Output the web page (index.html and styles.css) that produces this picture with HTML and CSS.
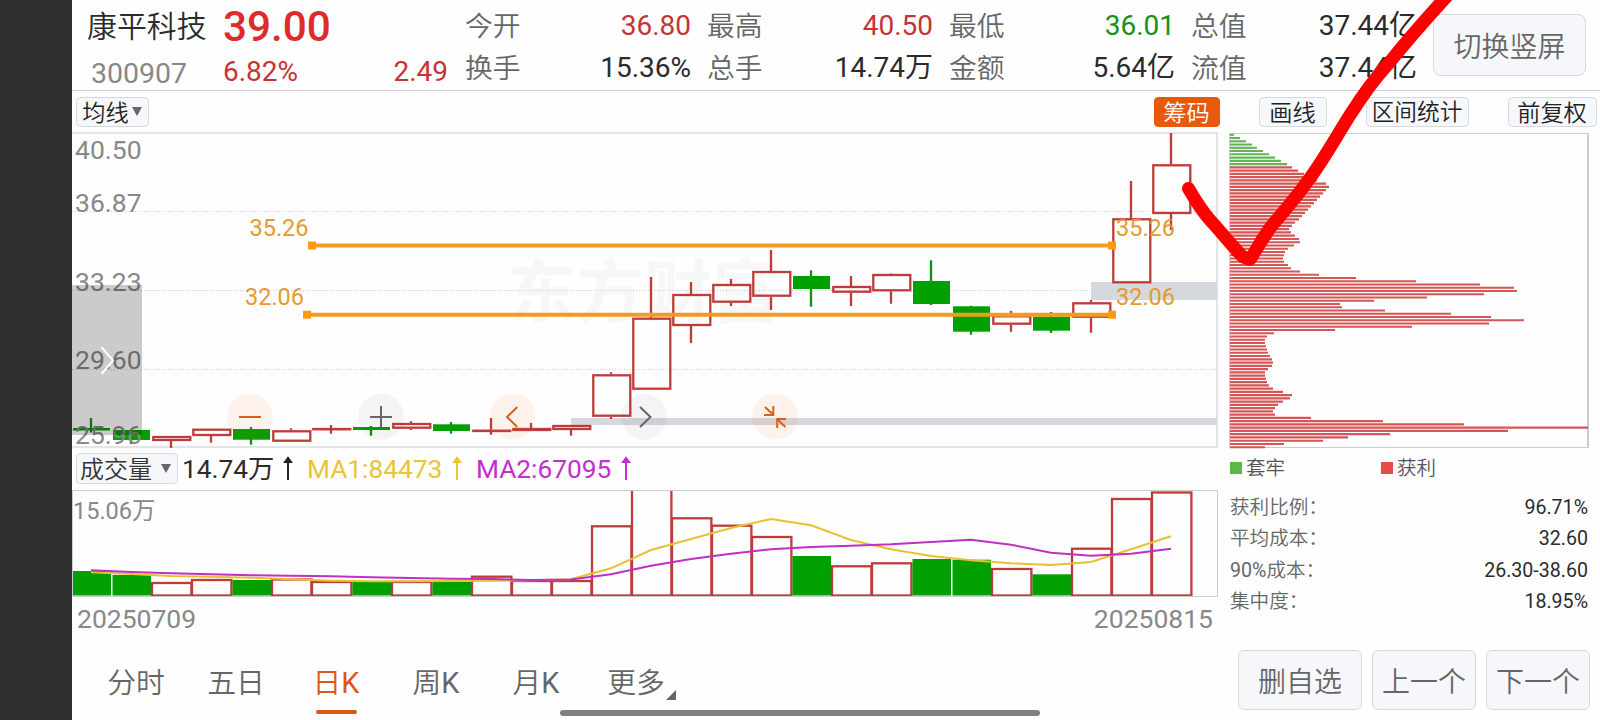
FILE: index.html
```html
<!DOCTYPE html>
<html lang="zh-CN">
<head>
    <meta charset="UTF-8">
    <meta name="viewport" content="width=device-width, initial-scale=1.0">
    <title>康平科技 300907</title>
    <link rel="stylesheet" href="styles.css">
</head>
<body>
<div class="side-strip"></div>
<div class="screen">
    <header class="header">
        <div class="stock">
            <div class="stock-name">康平科技</div>
            <div class="stock-code">300907</div>
        </div>
        <div class="price">
            <div class="price-now">39.00</div>
            <div class="price-change"><span>6.82%</span><span>2.49</span></div>
        </div>
        <div class="quotes">
            <div class="quote"><span class="label">今开</span><span class="up">36.80</span></div>
            <div class="quote"><span class="label">最高</span><span class="up">40.50</span></div>
            <div class="quote"><span class="label">最低</span><span class="down">36.01</span></div>
            <div class="quote"><span class="label">总值</span><span>37.44亿</span></div>
            <div class="quote"><span class="label">换手</span><span>15.36%</span></div>
            <div class="quote"><span class="label">总手</span><span>14.74万</span></div>
            <div class="quote"><span class="label">金额</span><span>5.64亿</span></div>
            <div class="quote"><span class="label">流值</span><span>37.44亿</span></div>
        </div>
        <button class="btn rotate-btn">切换竖屏</button>
    </header>

    <div class="toolbar">
        <button class="btn tool ma-btn">均线<i class="caret"></i></button>
        <button class="btn tool chip-btn">筹码</button>
        <button class="btn tool draw-btn">画线</button>
        <button class="btn tool range-btn">区间统计</button>
        <button class="btn tool adjust-btn">前复权</button>
    </div>

    <div class="content">
        <div class="charts">
            <svg class="k-chart" viewBox="72 132 1147 317">
                <text class="watermark" x="508" y="317">东方财富</text>
                <g class="grid-lines">
                    <path d="M72 211.5H1217M72 290.5H1217M72 369.5H1217"/>
                </g>
                <path class="frame" d="M72 133H1217V447H72"/>
                <g class="gap-zones">
                    <rect x="1091" y="282" width="126" height="18"/>
                    <rect x="571" y="418" width="646" height="7"/>
                </g>
                <g id="candles"></g>
                <g class="axis">
                    <text x="75" y="159">40.50</text>
                    <text x="75" y="212">36.87</text>
                    <text x="75" y="291">33.23</text>
                    <text x="75" y="369">29.60</text>
                    <text x="75" y="444">25.96</text>
                </g>
                <g class="levels">
                    <path d="M312 245.5H1112M307 314.7H1112"/>
                    <rect x="308" y="241.5" width="8" height="8"/>
                    <rect x="1108" y="241.5" width="8" height="8"/>
                    <rect x="303" y="310.7" width="8" height="8"/>
                    <rect x="1108" y="310.7" width="8" height="8"/>
                    <text x="249.5" y="236">35.26</text>
                    <text x="245" y="305">32.06</text>
                    <text x="1116" y="236">35.26</text>
                    <text x="1116" y="305">32.06</text>
                </g>
                <rect class="drawer" x="72" y="285" width="70" height="150"/>
                <path class="drawer-arrow" d="M101.500 347L113 360.500L101.500 374"/>
                <g class="zoom-btn warm">
                    <circle cx="250" cy="416.700" r="23"/>
                    <path d="M239 417H261"/>
                </g>
                <g class="zoom-btn">
                    <circle cx="381" cy="416.700" r="23"/>
                    <path d="M370 417H392M381 406V428"/>
                </g>
                <g class="zoom-btn warm">
                    <circle cx="512.700" cy="416.700" r="23"/>
                    <path d="M517.300 407L507 417L517.300 427"/>
                </g>
                <g class="zoom-btn">
                    <circle cx="644.200" cy="416.700" r="23"/>
                    <path d="M640 407L650.500 417L640 427"/>
                </g>
                <g class="zoom-btn warm">
                    <circle cx="775" cy="416.700" r="23"/>
                    <path d="M765 407L773 414.500M773.300 406V415H764M785.500 427L777.500 419.500M777.200 428V419H786"/>
                </g>
            </svg>

            <div class="volume-bar">
                <button class="btn volume-btn">成交量<i class="caret"></i></button>
                <span class="vol">14.74万</span>
                <svg class="arrow" viewBox="0 0 10 24"><path d="M5 24V2M2 6L5 2L8 6Z"/></svg>
                <span class="ma1">MA1:84473</span>
                <svg class="arrow ma1" viewBox="0 0 10 24"><path d="M5 24V2M2 6L5 2L8 6Z"/></svg>
                <span class="ma2">MA2:67095</span>
                <svg class="arrow ma2" viewBox="0 0 10 24"><path d="M5 24V2M2 6L5 2L8 6Z"/></svg>
            </div>

            <svg class="v-chart" viewBox="72 490 1147 108">
                <text class="v-label" x="73" y="519">15.06万</text>
                <g id="volumes"></g>
                <path class="thin-frame" d="M72.500 490.500H1217.500V596.500H72.500Z"/>
                <polyline class="ma1-line" id="ma1"/>
                <polyline class="ma2-line" id="ma2"/>
            </svg>

            <div class="dates"><span>20250709</span><span>20250815</span></div>
        </div>

        <div class="chips">
            <svg class="chip-chart" viewBox="1229 132 360 317">
                <path class="thin-frame" d="M1588 133.500H1229.500V447.500H1588"/>
                <path class="chip-right" d="M1588 133V448"/>
                <g id="chip-lines"></g>
            </svg>
            <div class="legend">
                <span class="lock">套牢</span>
                <span class="gain">获利</span>
            </div>
            <div class="stat"><span>获利比例：</span><b>96.71%</b></div>
            <div class="stat"><span>平均成本：</span><b>32.60</b></div>
            <div class="stat"><span><em>90%</em>成本：</span><b>26.30-38.60</b></div>
            <div class="stat"><span>集中度：</span><b>18.95%</b></div>
        </div>
    </div>

    <footer class="footer">
        <nav class="tabs">
            <a class="tab">分时</a>
            <a class="tab">五日</a>
            <a class="tab active">日<em>K</em></a>
            <a class="tab">周<em>K</em></a>
            <a class="tab">月<em>K</em></a>
            <a class="tab more">更多</a>
        </nav>
        <div class="actions">
            <button class="btn">删自选</button>
            <button class="btn">上一个</button>
            <button class="btn">下一个</button>
        </div>
    </footer>
</div>

<div class="home-bar"></div>
<svg class="pen" viewBox="0 0 1600 720">
    <path d="M1188.500 188.500C1194 198 1202 211 1210 220C1222 233 1233 247 1243 257L1250 259.500C1257 249 1264 235 1274 223C1286 209 1298 195 1307 182C1322 163 1336 137 1350 115C1364 93 1374 79 1389 63C1405 43 1425 20 1447 -4"/>
</svg>
<script src="chart.js"></script>
</body>
</html>
```
FILE: styles.css
```css
* {
    box-sizing: border-box;
}

body {
    margin: 0;
    width: 1600px;
    height: 720px;
    display: flex;
    overflow: hidden;
    background: #fefefe;
    color: #2b2b2b;
    font-family: Roboto, "Noto Sans CJK SC", sans-serif;
}

em {
    font-style: normal;
    font-weight: 400;
}

.side-strip {
    width: 72px;
    background: #303030;
}

.screen {
    width: 1528px;
    display: flex;
    flex-direction: column;
}

.btn {
    display: flex;
    align-items: center;
    justify-content: center;
    padding: 0;
    border: 1px solid #d6d9df;
    border-radius: 6px;
    background: #f6f7fa;
    color: #666;
    font-family: inherit;
    font-weight: 350;
    font-size: 28px;
    white-space: nowrap;
}

/* header */
.header {
    height: 91px;
    display: flex;
    border-bottom: 1px solid #d0d0d0;
    padding-left: 15px;
}

.stock {
    width: 136px;
}

.stock-name {
    font-size: 29.9px;
    font-weight: 350;
    line-height: 53px;
}

.stock-code {
    padding-left: 4px;
    font-size: 28.5px;
    line-height: 41px;
    color: #888;
}

.price {
    width: 225px;
    color: #dc2c2c;
}

.price-now {
    font-size: 42.3px;
    font-weight: 500;
    line-height: 53px;
}

.price-change {
    display: flex;
    justify-content: space-between;
    font-size: 28px;
    line-height: 37px;
    color: #c53434;
}

.quotes {
    margin: 5px 0 0 17px;
    width: 951px;
    height: 84px;
    display: grid;
    grid-template-columns: repeat(4, 226px);
    column-gap: 16px;
    grid-auto-rows: 42px;
    font-size: 28px;
    line-height: 41px;
}

.quote {
    display: flex;
    justify-content: space-between;
}

.quote .label {
    color: #666;
    font-size: 27.8px;
    font-weight: 350;
    line-height: 43px;
}

.up {
    color: #c53434;
}

.down {
    color: #169016;
}

.rotate-btn {
    width: 153px;
    height: 62px;
    margin: 14px 0 0 17px;
    border-radius: 8px;
}

/* toolbar */
.toolbar {
    height: 41px;
    display: flex;
    padding: 6px 0 0 4px;
}

.tool {
    height: 30px;
    font-size: 23.2px;
    color: #222;
    border-radius: 4px;
    padding: 0 1px 3px 0;
}

.caret {
    border: 5px solid transparent;
    border-top: 9px solid #666;
    border-bottom: 0;
    margin: 2px 0 0 3px;
}

.ma-btn {
    width: 73px;
}

.chip-btn {
    width: 66px;
    margin-left: 1005px;
    background: #e8590c;
    border-color: #e8590c;
    color: #fff;
}

.draw-btn {
    width: 68px;
    margin-left: 39px;
}

.range-btn {
    width: 103px;
    margin-left: 39px;
    font-size: 22.7px;
}

.adjust-btn {
    width: 89px;
    margin-left: 39px;
}

/* charts */
.content {
    height: 508px;
    display: flex;
}

.charts {
    width: 1147px;
}

svg {
    display: block;
}

.k-chart {
    width: 1147px;
    height: 317px;
}

.watermark {
    font-size: 68px;
    font-weight: 700;
    fill: #f7f7f7;
}

.grid-lines {
    fill: none;
    stroke: #ccc;
    stroke-dasharray: 1 2;
}

.frame {
    fill: none;
    stroke: #e4e4e4;
    stroke-width: 2;
}

.thin-frame {
    fill: none;
    stroke: #ccc;
}

.gap-zones {
    fill: #d5d9dd;
}

.red {
    fill: none;
    stroke: #bc3c3a;
    stroke-width: 2.3;
}

.green {
    fill: #00a000;
    stroke: none;
}

.green-wick {
    stroke: #109010;
    stroke-width: 2.3;
}

.axis {
    font-size: 26.5px;
    fill: #888;
}

.levels {
    fill: #ff9910;
    font-size: 23.5px;
}

.levels path {
    stroke: #f29b20;
    stroke-width: 4;
}

.levels text {
    fill: #e59a30;
}

.drawer {
    fill: rgba(0, 0, 0, 0.2);
}

.drawer-arrow {
    fill: none;
    stroke: #fff;
    stroke-width: 2;
}

.zoom-btn circle {
    fill: rgba(0, 0, 0, 0.04);
}

.zoom-btn path {
    fill: none;
    stroke: #666;
    stroke-width: 2;
}

.zoom-btn.warm circle {
    fill: rgba(255, 100, 20, 0.08);
}

.zoom-btn.warm path {
    stroke: #d8601c;
}

.volume-bar {
    height: 41px;
    display: flex;
    align-items: flex-start;
    padding: 4px 0 0 4px;
    font-size: 26.3px;
    line-height: 32px;
}

.volume-btn {
    width: 102px;
    height: 31px;
    font-size: 24px;
    color: #333;
    border-radius: 4px;
    padding: 0 3px 2px 0;
}

.volume-btn .caret {
    margin-left: 9px;
}

.vol {
    width: 101px;
    margin-left: 4px;
}

.arrow {
    width: 10px;
    height: 24px;
    margin: 3px 0 0;
    fill: none;
    stroke: #222;
    stroke-width: 2;
}

span.ma1,
span.ma2 {
    width: 145px;
    margin-left: 14px;
    color: #eac338;
}

span.ma2 {
    color: #c030cc;
}

.arrow.ma1 {
    stroke: #eac338;
}

.arrow.ma2 {
    stroke: #c030cc;
}

.v-chart {
    width: 1147px;
    height: 108px;
}

.v-label {
    font-size: 23.5px;
    fill: #888;
}

.ma1-line,
.ma2-line {
    fill: none;
    stroke: #e8c030;
    stroke-width: 2;
}

.ma2-line {
    stroke: #bf30c4;
}

.dates {
    display: flex;
    justify-content: space-between;
    padding: 0 6px 0 5px;
    font-size: 26.5px;
    line-height: 41px;
    color: #888;
}

/* chip distribution */
.chips {
    width: 360px;
    margin-left: 10px;
}

.chip-chart {
    width: 360px;
    height: 317px;
}

.chip-right {
    stroke: #ccc;
    stroke-width: 2;
}

.chip-gain {
    stroke: #d65555;
    stroke-width: 2.1;
}

.chip-lock {
    stroke: #63b554;
    stroke-width: 2.1;
}

.legend {
    height: 42.5px;
    display: flex;
    font-size: 19.5px;
    font-weight: 350;
    line-height: 39px;
    color: #555;
}

.legend span {
    width: 151px;
}

.legend span::before {
    content: "";
    display: inline-block;
    width: 12px;
    height: 12px;
    margin: 0 4px 0 1px;
    vertical-align: 1px;
    background: #5cb947;
}

.legend .gain::before {
    background: #e54b4b;
}

.stat {
    display: flex;
    justify-content: space-between;
    height: 31.5px;
    padding: 0 1px;
    font-size: 19.6px;
    line-height: 31px;
    color: #666;
}

.stat span {
    font-weight: 350;
}

.stat b {
    color: #2b2b2b;
    font-weight: 400;
}

/* bottom bar */
.footer {
    height: 80px;
    display: flex;
    justify-content: space-between;
    padding: 10px 10px 0 14px;
}

.tabs {
    display: flex;
    font-size: 28.8px;
    font-weight: 350;
    line-height: 66px;
    text-align: center;
    color: #666;
}

.tab {
    width: 100px;
    height: 66px;
}

.tab.active {
    color: #d85a14;
}

.tab.active::after {
    content: "";
    display: block;
    width: 41px;
    height: 4px;
    margin: -6px auto 0;
    border-radius: 2px;
    background: #d85a14;
}

.more::after {
    content: "";
    display: inline-block;
    margin: 0 -11px 0 1px;
    border-left: 10px solid transparent;
    border-bottom: 10px solid #666;
    vertical-align: -7px;
}

.actions {
    display: flex;
    gap: 10px;
}

.actions .btn {
    width: 104px;
    height: 60px;
}

.actions .btn:first-child {
    width: 124px;
}

.home-bar {
    position: absolute;
    left: 560px;
    top: 710px;
    width: 480px;
    height: 6px;
    border-radius: 3px;
    background: #808080;
}

/* freehand mark over the whole screen */
.pen {
    position: absolute;
    left: 0;
    top: 0;
    width: 1600px;
    height: 720px;
    pointer-events: none;
}

.pen path {
    fill: none;
    stroke: #f00;
    stroke-width: 13;
    stroke-linecap: round;
    stroke-linejoin: round;
}
```
FILE: chart.js
```javascript
// [up, body top, body bottom, high, low]
const candles = [
    [0, 428, 430.5, 418, 432.5], [0, 430, 440, 430, 444], [1, 436, 441, 436, 448], [1, 428.7, 436, 428.7, 442.7],
    [0, 429, 439.7, 427, 444.7], [1, 430.3, 441.7, 428.3, 441.7], [1, 428, 430, 425, 433.7], [0, 427, 430, 426, 435.7],
    [1, 423, 428.7, 421.3, 430], [0, 424.3, 431, 422, 433.7], [1, 429.7, 431.7, 418, 434.7], [1, 428, 431, 423, 431],
    [1, 425, 430, 425, 435.7], [1, 374.3, 416.7, 372.3, 419], [1, 317.7, 389.7, 277, 389.7], [1, 294, 326, 282, 343],
    [1, 284, 302.7, 279, 306], [1, 271, 296.7, 250, 310], [0, 276, 289, 270.3, 306.7], [1, 286, 292.7, 276, 306],
    [1, 274, 291.3, 273.5, 303.7], [0, 281, 304, 260.3, 305], [0, 306.3, 331.7, 305.7, 334.7], [1, 315.3, 324.7, 311, 331.7],
    [0, 316.7, 330.7, 312, 333], [1, 302.3, 317.7, 300, 332.7], [1, 218.3, 283.3, 181, 283.3], [1, 164.3, 214, 133, 230]
];

// top edge of every volume bar
const volumes = [571, 575, 582, 579, 580, 578.5, 581, 582, 581, 581.7, 575.7, 580, 580, 525.3,
    480, 517.3, 524.7, 536, 556, 565.3, 562.3, 559, 559.7, 568, 574.3, 547.7, 498, 491.5];

const ma1 = [572.3, 574, 576, 576.7, 577.7, 579.3, 580.7, 581.3, 581.3, 581, 580.7, 580.3, 579.3, 568.3,
    550, 539, 528, 519, 525.3, 540, 549.3, 556, 560.3, 563.3, 565, 562, 549.3, 536.3];
const ma2 = [570.3, 572, 573.3, 574.3, 575.3, 575.7, 576.3, 577.3, 578, 578.7, 579, 580, 579.5, 574.3,
    565.7, 559, 553.7, 549.3, 547, 545.7, 544.3, 542, 539.7, 544.7, 552.7, 555.7, 553.7, 548.7];

// chip distribution from the highest price down, the first ten are above the last price
const chips = [4, 10, 16, 22, 27, 33, 39, 45, 51, 57, 62, 68, 74, 80, 87, 96, 99, 96, 93, 90,
    87, 84, 81, 78, 75, 72, 69, 65, 62, 59, 61, 65, 69, 70, 64, 58, 55, 54, 53, 54,
    58, 61, 70, 89, 126, 186, 250, 284, 287, 254, 197, 144, 110, 112, 155, 221, 261, 294, 259, 182,
    105, 44, 37, 35, 35, 36, 37, 38, 40, 42, 43, 42, 38, 35, 35, 36, 37, 39, 43, 53,
    62, 60, 53, 48, 45, 43, 45, 81, 153, 234, 358, 278, 160, 118, 93, 54, 35];

function centerX(i) {
    return 91 + i * 40;
}

let html = '';
candles.forEach(([up, top, bottom, high, low], i) => {
    const x = centerX(i);
    if (up) {
        const h = Math.max(bottom - top - 2, 0.3);
        html += `<path class="red" d="M${x} ${high}V${top}M${x} ${bottom}V${low}"/>`;
        html += `<rect class="red" x="${x - 17.7}" y="${top + 1}" width="37" height="${h}"/>`;
    } else {
        html += `<path class="green-wick" d="M${x} ${high}V${low}"/>`;
        html += `<rect class="green" x="${x - 18}" y="${top}" width="37" height="${bottom - top}"/>`;
    }
});
document.getElementById('candles').innerHTML = html;

html = '';
volumes.forEach((top, i) => {
    const x = centerX(i) - 19;
    if (candles[i][0]) {
        html += `<rect class="red" x="${x}" y="${top + 1}" width="39.4" height="${594.5 - top}"/>`;
    } else {
        html += `<rect class="green" x="${x + 0.5}" y="${top}" width="38.5" height="${595.5 - top}"/>`;
    }
});
document.getElementById('volumes').innerHTML = html;

document.getElementById('ma1').setAttribute('points', ma1.map((y, i) => `${centerX(i)},${y}`).join(' '));
document.getElementById('ma2').setAttribute('points', ma2.map((y, i) => `${centerX(i)},${y}`).join(' '));

html = '';
chips.forEach((w, i) => {
    const y = (134.8 + i * 3.254).toFixed(2);
    html += `<path class="${i < 10 ? 'chip-lock' : 'chip-gain'}" d="M1230 ${y}h${w}"/>`;
});
document.getElementById('chip-lines').innerHTML = html;
```
